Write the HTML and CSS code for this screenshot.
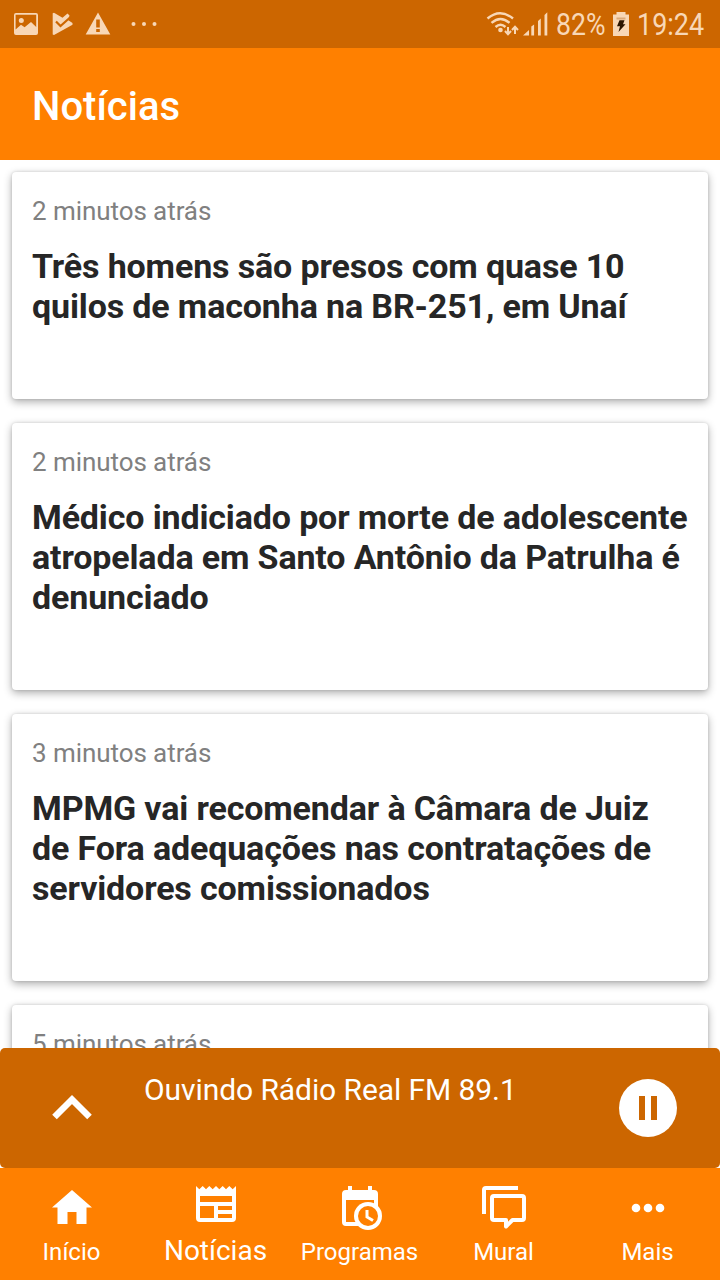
FILE: index.html
```
<!DOCTYPE html>
<html lang="pt-BR">
<head>
  <meta charset="UTF-8" />
  <meta name="viewport" content="width=device-width, initial-scale=1.0"/>
  <title>Notícias - Rádio Real FM 89.1</title>
  <link rel="stylesheet" href="styles.css">
</head>
<body>
  <div class="status-bar">
    <svg class="status-left" width="160" height="48" viewBox="0 0 160 48" fill="#f8d7b6">
      <path fill-rule="evenodd" d="M16 13h20a2 2 0 0 1 2 2v18a2 2 0 0 1-2 2H16a2 2 0 0 1-2-2V15a2 2 0 0 1 2-2zm-.4 1.800v14.700l5.400-4.800 3.600 2.600 6.400-5.200 5.200 5V14.800z"/>
      <circle cx="21.300" cy="20.400" r="2.500"/>
      <path d="M52.700 13.200l1.300-.4 8.500 5L67.500 13.500l2 2-1.500 4.500 4.500 3v1.800L54 35l-1.300-.6z"/>
      <path d="M56 21.500l4.500 4.500 9-8" fill="none" stroke="#cc6600" stroke-width="2.200"/>
      <path fill-rule="evenodd" d="M98 12.500L110.300 34.500H85.700zM96.200 19.500h3.600v8h-3.600zM96.200 29h3.600v3h-3.600z"/>
      <circle cx="133.500" cy="24" r="2"/><circle cx="144" cy="24" r="2"/><circle cx="154.500" cy="24" r="2"/>
    </svg>
    <div class="status-right">
      <svg width="64" height="48" viewBox="0 0 64 48" fill="#f8d7b6">
        <g fill="none" stroke="#f8d7b6" stroke-width="2.400">
          <path d="M1.500 18.500Q14 8 27 18.500"/>
          <path d="M5.500 22.800Q14.500 15 23.500 22.800"/>
          <path d="M9.500 27Q14.500 22.500 19.500 27"/>
          <path stroke-width="2" d="M22 27v7m-3-3l3 3.200 3-3.200M29 34v-7m-3 3l3-3.200 3 3.200"/>
        </g>
        <circle cx="14.500" cy="30" r="2.300"/>
        <path d="M37 35.500l6-5.500v5.500zM45.300 26.500l2.800-2v11h-2.800zM52 21l2.800-2.500v17H52zM58.500 15l2.800-2.700v23.200h-2.800z"/>
      </svg>
      <span class="battery"><b>82%</b></span>
      <svg width="20" height="48" viewBox="0 0 20 48">
        <path fill="#f8d7b6" d="M5.500 12h9v2.500h3.500V36H2V14.500h3.500z"/>
        <path fill="#dba878" d="M5.500 17.500h9v2h-9z"/>
        <path fill="#2b1500" d="M8.500 20.200h5l-1.500 4h2.500L7.500 32l1.500-5.700H6z"/>
      </svg>
      <span class="clock"><b>19:24</b></span>
    </div>
  </div>

  <header class="header">
    <h1>Notícias</h1>
  </header>

  <main class="news">
    <div class="card">
      <p class="time">2 minutos atrás</p>
      <h2>Três homens são presos com quase 10 quilos de maconha na BR-251, em Unaí</h2>
    </div>
    <div class="card">
      <p class="time">2 minutos atrás</p>
      <h2>Médico indiciado por morte de adolescente atropelada em Santo Antônio da Patrulha é denunciado</h2>
    </div>
    <div class="card">
      <p class="time">3 minutos atrás</p>
      <h2>MPMG vai recomendar à Câmara de Juiz de Fora adequações nas contratações de servidores comissionados</h2>
    </div>
    <div class="card">
      <p class="time">5 minutos atrás</p>
    </div>
  </main>

  <div class="player-wrap">
    <div class="player">
      <svg width="144" height="120" viewBox="0 0 144 120">
        <path d="M54.500 69L72 51.500 89.500 69" fill="none" stroke="#fff" stroke-width="6.500"/>
      </svg>
      <div class="playing">Ouvindo Rádio Real FM 89.1</div>
      <svg width="144" height="120" viewBox="0 0 144 120">
        <circle cx="72" cy="60" r="29" fill="#fff"/>
        <path d="M63 48h6v24h-6zM75 48h6v24h-6z" fill="#cc6600"/>
      </svg>
    </div>
  </div>

  <nav class="tabs">
    <a class="tab">
      <svg width="48" height="48" viewBox="0 0 48 48" fill="#fff">
        <path d="M24 6l20 17.500h-5.500V40h-10V28h-9v12h-10V23.500H4z"/>
      </svg>
      <span>Início</span>
    </a>
    <a class="tab active">
      <svg width="48" height="48" viewBox="0 0 48 48" fill="#fff">
        <path fill-rule="evenodd" d="M4 2l3.300 3.300L10.700 2 14 5.300 17.300 2l3.400 3.300L24 2l3.300 3.300L30.700 2 34 5.300 37.300 2l3.400 3.300L44 2v32a4 4 0 0 1-4 4H8a4 4 0 0 1-4-4zM8 12v6h32v-6zM8 22v12h14V22zM26 22v4h14v-4zM26 30v4h14v-4z"/>
      </svg>
      <span>Notícias</span>
    </a>
    <a class="tab">
      <svg width="48" height="48" viewBox="0 0 48 48" fill="#fff">
        <path fill-rule="evenodd" d="M12 2h4v4h16V2h4v4h2a4 4 0 0 1 4 4v24a8 8 0 0 1-8 8H10a4 4 0 0 1-4-4V10a4 4 0 0 1 4-4h2zM10 16v22h28V16z"/>
        <circle cx="32" cy="32" r="14"/>
        <circle cx="32" cy="32" r="10" fill="#ff8000"/>
        <path d="M31 26v7l6 3.500" fill="none" stroke="#fff" stroke-width="3"/>
      </svg>
      <span>Programas</span>
    </a>
    <a class="tab">
      <svg width="48" height="48" viewBox="0 0 48 48" fill="none" stroke="#fff" stroke-width="4">
        <path d="M4 30V6a2 2 0 0 1 2-2h32"/>
        <path d="M14 12h28a2 2 0 0 1 2 2v20a2 2 0 0 1-2 2h-9.500L26 42.500V36H14a2 2 0 0 1-2-2V14a2 2 0 0 1 2-2z" stroke-linejoin="round"/>
      </svg>
      <span>Mural</span>
    </a>
    <a class="tab">
      <svg width="48" height="48" viewBox="0 0 48 48" fill="#fff">
        <circle cx="12" cy="24" r="4.300"/><circle cx="24" cy="24" r="4.300"/><circle cx="36" cy="24" r="4.300"/>
      </svg>
      <span>Mais</span>
    </a>
  </nav>
</body>
</html>
```
FILE: styles.css
```
* {
  box-sizing: border-box;
}

body {
  margin: 0;
  height: 1280px;
  font-family: Roboto, sans-serif;
  background-color: white;
  display: flex;
  flex-direction: column;
  overflow: hidden;
}

svg {
  display: block;
  flex-shrink: 0;
}

.status-bar {
  height: 48px;
  flex-shrink: 0;
  background: #cc6600;
  color: #f8d7b6;
  display: flex;
  justify-content: space-between;
}

.status-right {
  display: flex;
  align-items: center;
  padding-right: 15px;
  font-size: 31px;
  line-height: 48px;
}

.status-right b {
  display: block;
  font-weight: 400;
  padding-top: 1px;
  transform: scaleX(0.86);
  transform-origin: left;
}

.battery {
  width: 50px;
  margin-left: 6px;
  margin-right: 5px;
}

.clock {
  width: 68px;
  margin-left: 6px;
}

.status-right .clock b {
  transform: scaleX(0.87);
}

.header {
  height: 112px;
  flex-shrink: 0;
  background: #ff8000;
  padding: 0 32px;
  display: flex;
  align-items: center;
}

.header h1 {
  margin: 4px 0 0;
  color: white;
  font-size: 40px;
  font-weight: 500;
}

.news {
  flex: 1;
  min-height: 0;
  overflow: hidden;
  padding: 12px;
  display: flex;
  flex-direction: column;
  gap: 24px;
}

.card {
  flex-shrink: 0;
  background: white;
  border-radius: 4px;
  box-shadow: 0 3px 8px rgba(0, 0, 0, 0.32), 0 0 3px rgba(0, 0, 0, 0.14);
  padding: 24px 20px 73px;
}

.time {
  margin: 0 0 20px;
  font-size: 26px;
  line-height: 30px;
  letter-spacing: -0.07px;
  color: #808080;
}

.card h2 {
  margin: 0;
  font-size: 34px;
  line-height: 40px;
  font-weight: 700;
  letter-spacing: -0.14px;
  color: #262626;
}

.player-wrap {
  flex-shrink: 0;
  background: white;
}

.player {
  height: 120px;
  background: #cc6600;
  border-radius: 5px;
  display: flex;
}

.playing {
  flex: 1;
  padding-top: 24px;
  color: white;
  font-size: 30px;
  line-height: 36px;
  letter-spacing: -0.08px;
  white-space: nowrap;
}

.tabs {
  height: 112px;
  flex-shrink: 0;
  background: #ff8000;
  display: flex;
}

.tab {
  width: 144px;
  padding-top: 16px;
  display: flex;
  flex-direction: column;
  align-items: center;
  color: white;
  font-size: 24px;
  line-height: 40px;
}

.tab span {
  margin-right: 1px;
}

.tab.active {
  font-size: 28px;
  line-height: 38px;
}
```
